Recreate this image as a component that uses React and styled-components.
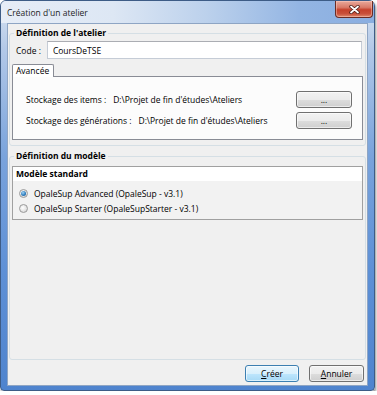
import styled, { createGlobalStyle } from 'styled-components';

const GlobalStyle = createGlobalStyle`
  html, body { margin: 0; padding: 0; background: #ffffff; }
  body {
    font-family: "Open Sans", "Liberation Sans", sans-serif;
    font-size: 8.5px;
    color: #000;
  }
  * { box-sizing: border-box; }
`;

function CloseIcon() {
  return (
    <svg width="11" height="9" viewBox="0 0 11 9">
      <path d="M2 1.5 L9 7.5 M9 1.5 L2 7.5" stroke="#4a1a14" strokeWidth="3.4" strokeLinecap="round" />
      <path d="M2 1.5 L9 7.5 M9 1.5 L2 7.5" stroke="#ffffff" strokeWidth="1.8" strokeLinecap="round" />
    </svg>
  );
}

function Dialog() {
  return (
    <Window>
      <TitleBar>
        <Title>Création d'un atelier</Title>
        <CloseButton><CloseIcon /></CloseButton>
      </TitleBar>
      <Client>
        <Group $top={3}>
          <Legend>Définition de l'atelier</Legend>
          <CodeRow>
            <span>Code :</span>
            <Input defaultValue="CoursDeTSE" />
          </CodeRow>
          <Tabs>
            <Tab>Avancée</Tab>
          </Tabs>
          <Panel>
            <PathRow>
              <PathLabel>Stockage des items :</PathLabel>
              <PathValue>D:\Projet de fin d'études\Ateliers</PathValue>
              <Button>...</Button>
            </PathRow>
            <PathRow>
              <PathLabel>Stockage des générations :</PathLabel>
              <PathValue>D:\Projet de fin d'études\Ateliers</PathValue>
              <Button>...</Button>
            </PathRow>
          </Panel>
        </Group>
        <Group $top={4} $grow>
          <Legend>Définition du modèle</Legend>
          <ListBox>
            <ListHeader>Modèle standard</ListHeader>
            <ListItems>
              <Option>
                <Radio $checked />
                OpaleSup Advanced (OpaleSup - v3.1)
              </Option>
              <Option>
                <Radio />
                OpaleSup Starter (OpaleSupStarter - v3.1)
              </Option>
            </ListItems>
          </ListBox>
        </Group>
        <Footer>
          <Button $default $w={54}><u>C</u>réer</Button>
          <Button $w={55}><u>A</u>nnuler</Button>
        </Footer>
      </Client>
    </Window>
  );
}

const Window = styled.div`
  width: 375px;
  height: 391px;
  display: flex;
  flex-direction: column;
  border: 1px solid #3d5c86;
  border-radius: 6px 6px 4px 4px;
  padding: 0 6px 4px;
  background: linear-gradient(180deg, #d9e4f2 0%, #b3c9e8 12%, #79a3dc 40%, #5d90d6 70%, #4f84ce 100%);
  box-shadow: 1px 2px 3px rgba(0, 0, 0, 0.45);
`;

const TitleBar = styled.div`
  height: 22px;
  margin: 0 -6px;
  padding: 0 1px 0 6px;
  display: flex;
  justify-content: space-between;
  align-items: flex-start;
  border-radius: 5px 5px 0 0;
  background: linear-gradient(90deg, #e6edf7 0%, #dde7f4 30%, #bcd1ec 55%, #93b5e3 80%, #8aaee0 100%);
`;

const Title = styled.div`
  padding-top: 6px;
  line-height: 12px;
  color: #1e1e1e;
`;

const CloseButton = styled.div`
  width: 38px;
  height: 17px;
  display: flex;
  align-items: center;
  justify-content: center;
  border: 1px solid #6a2c24;
  border-top: none;
  border-radius: 0 0 4px 4px;
  background: linear-gradient(180deg, #e8a99b 0%, #d87a68 40%, #c5412b 55%, #c9503a 80%, #de8a6e 100%);
  box-shadow: inset 0 0 0 1px rgba(255, 210, 200, 0.45);
`;

const Client = styled.div`
  flex: 1;
  display: flex;
  flex-direction: column;
  padding: 0 1px 2px;
  background: #f0f0f0;
  border: 1px solid #8ea5c4;
`;

const Group = styled.fieldset`
  margin: ${p => p.$top}px 0 0;
  padding: 0 1px 5px 2px;
  border: 1px solid #d5dfe5;
  border-radius: 3px;
  min-width: 0;
  ${p => p.$grow && 'flex: 1;'}
`;

const Legend = styled.legend`
  margin-left: 2px;
  padding: 0 2px;
  line-height: 12px;
  font-weight: bold;
  color: #000;
`;

const CodeRow = styled.div`
  display: flex;
  align-items: center;
  gap: 6px;
  margin: 2px 2px 0 4px;
`;

const Input = styled.input`
  flex: 1;
  height: 18px;
  padding: 0 5px;
  border: 1px solid #c5ccd6;
  border-top-color: #abadb3;
  background: #ffffff;
  font: inherit;
  color: #000;
  outline: none;
`;

const Tabs = styled.div`
  display: flex;
  margin-top: 5px;
  position: relative;
  z-index: 1;
`;

const Tab = styled.div`
  height: 13px;
  padding: 0 3px;
  line-height: 12px;
  border: 1px solid #898c95;
  border-bottom: none;
  border-radius: 2px 2px 0 0;
  background: #ffffff;
  margin-bottom: -1px;
  width: 42px;
`;

const Panel = styled.div`
  margin-right: 1px;
  padding: 14px 10px 10px 13px;
  border: 1px solid #898c95;
  background: #fcfcfc;
  display: flex;
  flex-direction: column;
  gap: 4px;
`;

const PathRow = styled.div`
  display: flex;
  align-items: center;
`;

const PathLabel = styled.span`
  margin-right: 7px;
`;

const PathValue = styled.span`
  flex: 1;
`;

const Button = styled.button`
  width: ${p => p.$w || 56}px;
  height: 17px;
  padding: 0;
  font: inherit;
  line-height: 14px;
  color: #000;
  border: 1px solid ${p => (p.$default ? '#3c7fb1' : '#707070')};
  border-radius: 3px;
  background: ${p =>
    p.$default
      ? 'linear-gradient(180deg, #eaf6fd 0%, #d9f0fc 50%, #bee6fd 51%, #a7d9f5 100%)'
      : 'linear-gradient(180deg, #f2f2f2 0%, #ebebeb 50%, #dddddd 51%, #cfcfcf 100%)'};
  box-shadow: inset 0 0 0 1px rgba(255, 255, 255, 0.6);
  u { text-decoration: underline; }
`;

const ListBox = styled.div`
  margin: 4px 1px 0 0;
  border: 1px solid #a0a0a0;
`;

const ListHeader = styled.div`
  height: 14px;
  line-height: 14px;
  padding-left: 3px;
  font-weight: bold;
  background: #ffffff;
`;

const ListItems = styled.div`
  padding: 5px 0 3px;
  background: #f2f2f2;
`;

const Option = styled.div`
  height: 15px;
  display: flex;
  align-items: center;
  padding-left: 6px;
`;

const Radio = styled.span`
  width: 9px;
  height: 9px;
  margin-right: 6px;
  border-radius: 50%;
  border: 1px solid #9a9a9a;
  background: radial-gradient(circle at 40% 40%, #ffffff 0%, #e2e2e2 60%, #cfcfcf 100%);
  display: flex;
  align-items: center;
  justify-content: center;
  &::after {
    content: '';
    display: ${p => (p.$checked ? 'block' : 'none')};
    width: 5px;
    height: 5px;
    border-radius: 50%;
    background: radial-gradient(circle at 40% 35%, #9fd3f5 0%, #2f7fc0 55%, #174f88 100%);
  }
`;

const Footer = styled.div`
  display: flex;
  justify-content: flex-end;
  gap: 10px;
  margin: 5px 2px 1px 0;
`;

export default function App() {
  return (
    <>
      <GlobalStyle />
      <Dialog />
    </>
  );
}
